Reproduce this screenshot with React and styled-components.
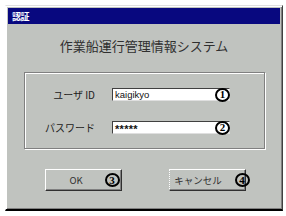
import React from "react";
import styled, { createGlobalStyle } from "styled-components";

const Global = createGlobalStyle`
  html, body {
    margin: 0;
    background: #ffffff;
  }
  body {
    font-family: "Noto Sans CJK JP", "Liberation Sans", sans-serif;
  }
`;

export default function App() {
  return (
    <>
      <Global />
      <Page>
        <Window>
          <TitleBar>
            <TitleText>認証</TitleText>
          </TitleBar>
          <Heading>作業船運行管理情報システム</Heading>
          <GroupBox>
            <Row>
              <Label>ユーザ ID</Label>
              <Field>
                <TextBox>kaigikyo</TextBox>
                <Mark $right={0}>1</Mark>
              </Field>
            </Row>
            <Row>
              <Label>パスワード</Label>
              <Field>
                <TextBox>
                  <Stars>*****</Stars>
                </TextBox>
                <Mark $right={0}>2</Mark>
              </Field>
            </Row>
          </GroupBox>
          <ButtonRow>
            <Button>
              <ButtonLabel $shift={-7}>OK</ButtonLabel>
              <Mark $right={1}>3</Mark>
            </Button>
            <Button $focused>
              <ButtonLabel $shift={-9}>キャンセル</ButtonLabel>
              <Mark $right={-5}>4</Mark>
            </Button>
          </ButtonRow>
        </Window>
      </Page>
    </>
  );
}

const Page = styled.div`
  padding: 5px 0 0 5px;
`;

const Window = styled.div`
  box-sizing: border-box;
  width: 278px;
  height: 206px;
  background: #c0c3bf;
  border-top: 1px solid #dfdfdf;
  border-left: 1px solid #ffffff;
  border-right: 1px solid #404040;
  border-bottom: 2px solid #000000;
  box-shadow: inset 1px 1px 0 #ffffff, inset -1px -1px 0 #808080;
  padding: 2px 2px 0 2px;
  display: flex;
  flex-direction: column;
`;

const TitleBar = styled.div`
  height: 16px;
  background: #08087f;
  display: flex;
  align-items: center;
  padding-left: 4px;
`;

const TitleText = styled.span`
  color: #ffffff;
  font-size: 9px;
  font-weight: 700;
  letter-spacing: -0.5px;
`;

const Heading = styled.div`
  margin-top: 14px;
  height: 16px;
  line-height: 16px;
  text-align: center;
  font-size: 13px;
  color: #303030;
`;

const GroupBox = styled.div`
  box-sizing: border-box;
  margin: 18px 0 0 16px;
  width: 241px;
  height: 77px;
  border: 1px solid #808080;
  box-shadow: inset 1px 1px 0 #ffffff, 1px 1px 0 #ffffff;
  padding-top: 14px;
  display: flex;
  flex-direction: column;
  gap: 20px;
`;

const Row = styled.div`
  display: grid;
  grid-template-columns: 70px 118px;
  column-gap: 17px;
  align-items: center;
  height: 13px;
`;

const Label = styled.span`
  text-align: right;
  font-size: 10px;
  color: #202020;
  white-space: nowrap;
`;

const Field = styled.div`
  position: relative;
  height: 13px;
`;

const TextBox = styled.div`
  box-sizing: border-box;
  height: 13px;
  background: #ffffff;
  border-top: 1px solid #404040;
  border-left: 1px solid #404040;
  border-right: 1px solid #dfdfdf;
  border-bottom: 1px solid #dfdfdf;
  padding-left: 2px;
  font-family: "Liberation Sans", sans-serif;
  font-size: 9.5px;
  line-height: 11px;
  color: #111111;
`;

const Stars = styled.span`
  display: inline-block;
  font-size: 11px;
  font-weight: 700;
  line-height: 11px;
  letter-spacing: 0.3px;
  transform: translateY(2px);
`;

const Mark = styled.span`
  position: absolute;
  right: ${(p) => p.$right}px;
  top: 50%;
  transform: translateY(-50%);
  box-sizing: border-box;
  width: 15px;
  height: 14px;
  border: 2px solid #000000;
  border-radius: 50%;
  display: flex;
  align-items: center;
  justify-content: center;
  font-family: "Liberation Serif", serif;
  font-weight: 700;
  font-size: 11px;
  line-height: 1;
  color: #000000;
`;

const ButtonRow = styled.div`
  margin-top: 20px;
  display: flex;
  justify-content: center;
  gap: 47px;
  padding-left: 2px;
`;

const Button = styled.div`
  position: relative;
  box-sizing: border-box;
  width: 77px;
  height: 22px;
  background: #c0c3bf;
  border-top: 1px solid #ffffff;
  border-left: ${(p) => (p.$focused ? "1px dotted #ffffff" : "1px solid #ffffff")};
  border-right: 1px solid #303030;
  border-bottom: 1px solid #303030;
  box-shadow: inset -1px -1px 0 #808080;
  display: flex;
  align-items: center;
  justify-content: center;
`;

const ButtonLabel = styled.span`
  position: relative;
  left: ${(p) => p.$shift}px;
  font-size: 9.5px;
  color: #303030;
`;
